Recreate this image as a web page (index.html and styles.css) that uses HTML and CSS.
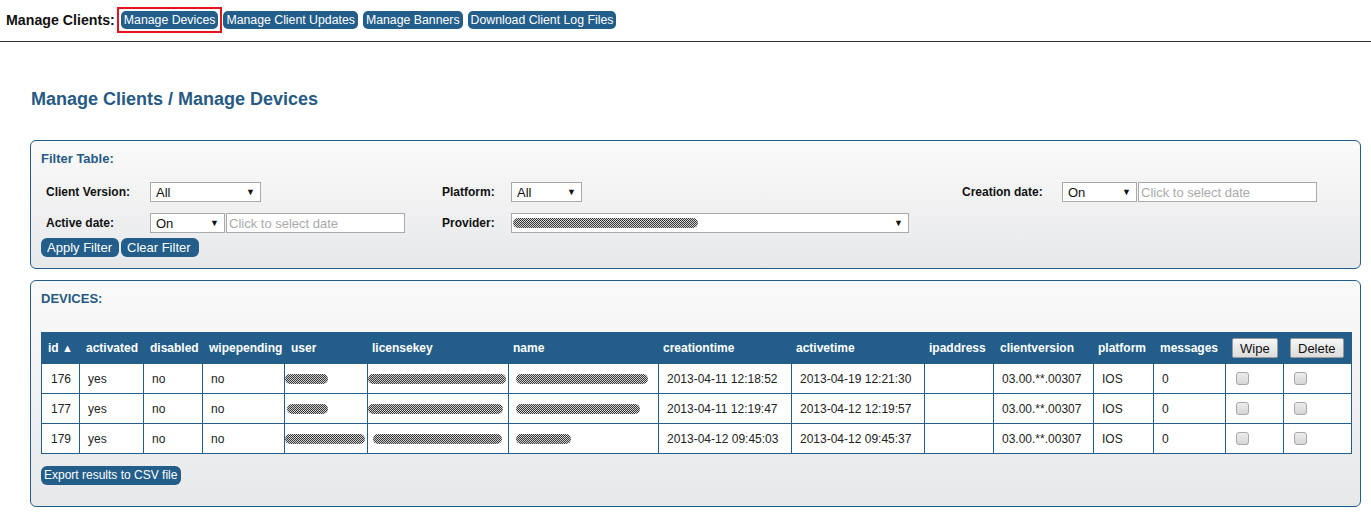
FILE: index.html
```html
<!DOCTYPE html>
<html>
<head>
<meta charset="utf-8">
<link rel="stylesheet" href="styles.css">
</head>
<body>
<div class="topbar">
  <span class="toplabel">Manage Clients:</span>
  <nav class="topnav">
    <span class="hl"><a class="btn">Manage Devices</a></span>
    <a class="btn">Manage Client Updates</a>
    <a class="btn">Manage Banners</a>
    <a class="btn">Download Client Log Files</a>
  </nav>
</div>

<main class="content">
  <h1 class="title">Manage Clients / Manage Devices</h1>

  <section class="panel filter">
    <h2 class="panel-title">Filter Table:</h2>
    <div class="fgrid">
      <label class="flabel">Client Version:</label>
      <div class="fctl"><div class="sel w111"><span>All</span><span class="arr">▼</span></div></div>
      <label class="flabel">Platform:</label>
      <div class="fctl"><div class="sel w70"><span>All</span><span class="arr">▼</span></div></div>
      <label class="flabel">Creation date:</label>
      <div class="fctl"><div class="sel w75"><span>On</span><span class="arr">▼</span></div><div class="datein">Click to select date</div></div>

      <label class="flabel">Active date:</label>
      <div class="fctl"><div class="sel w75"><span>On</span><span class="arr">▼</span></div><div class="datein">Click to select date</div></div>
      <label class="flabel">Provider:</label>
      <div class="fctl span3"><div class="sel w397"><span class="blob" style="width:185px;margin-left:-4px"></span><span class="arr">▼</span></div></div>
    </div>
    <div class="fbuttons">
      <a class="btn big">Apply Filter</a><a class="btn big">Clear Filter</a>
    </div>
  </section>

  <section class="panel devices">
    <h2 class="panel-title">DEVICES:</h2>
    <table class="dtable">
      <colgroup>
        <col style="width:38px"><col style="width:64px"><col style="width:59px"><col style="width:82px">
        <col style="width:83px"><col style="width:141px"><col style="width:150px"><col style="width:133px">
        <col style="width:133px"><col style="width:69px"><col style="width:100px"><col style="width:60px">
        <col style="width:72px"><col style="width:58px"><col style="width:68px">
      </colgroup>
      <thead>
        <tr>
          <th>id <span class="sort">▲</span></th><th>activated</th><th>disabled</th><th>wipepending</th>
          <th>user</th><th class="pl">licensekey</th><th class="pl">name</th><th class="pl">creationtime</th>
          <th class="pl">activetime</th><th class="pl">ipaddress</th><th>clientversion</th><th class="pl">platform</th>
          <th>messages</th><th><button class="gbtn">Wipe</button></th><th><button class="gbtn">Delete</button></th>
        </tr>
      </thead>
      <tbody>
        <tr>
          <td class="num">176</td><td>yes</td><td>no</td><td>no</td>
          <td class="bc"><span class="blob" style="width:43px"></span></td>
          <td class="bc"><span class="blob" style="width:138px"></span></td>
          <td class="bc"><span class="blob" style="width:132px;margin-left:7px"></span></td>
          <td>2013-04-11 12:18:52</td><td>2013-04-19 12:21:30</td><td></td>
          <td>03.00.**.00307</td><td>IOS</td><td>0</td>
          <td class="cb"><input type="checkbox"></td><td class="cb"><input type="checkbox"></td>
        </tr>
        <tr>
          <td class="num">177</td><td>yes</td><td>no</td><td>no</td>
          <td class="bc"><span class="blob" style="width:41px;margin-left:2px"></span></td>
          <td class="bc"><span class="blob" style="width:135px"></span></td>
          <td class="bc"><span class="blob" style="width:124px;margin-left:7px"></span></td>
          <td>2013-04-11 12:19:47</td><td>2013-04-12 12:19:57</td><td></td>
          <td>03.00.**.00307</td><td>IOS</td><td>0</td>
          <td class="cb"><input type="checkbox"></td><td class="cb"><input type="checkbox"></td>
        </tr>
        <tr>
          <td class="num">179</td><td>yes</td><td>no</td><td>no</td>
          <td class="bc"><span class="blob" style="width:80px"></span></td>
          <td class="bc"><span class="blob" style="width:129px;margin-left:5px"></span></td>
          <td class="bc"><span class="blob" style="width:55px;margin-left:7px"></span></td>
          <td>2013-04-12 09:45:03</td><td>2013-04-12 09:45:37</td><td></td>
          <td>03.00.**.00307</td><td>IOS</td><td>0</td>
          <td class="cb"><input type="checkbox"></td><td class="cb"><input type="checkbox"></td>
        </tr>
      </tbody>
    </table>
    <div class="export"><a class="btn exp">Export results to CSV file</a></div>
  </section>
</main>
</body>
</html>
```

FILE: styles.css
```css
* { box-sizing: border-box; }
body {
  margin: 0;
  font-family: "Liberation Sans", Arial, sans-serif;
  color: #222;
  background: #fff;
}
.topbar {
  display: flex;
  align-items: center;
  height: 42px;
  padding: 0 0 2px 6px;
  border-bottom: 1px solid #333;
}
.toplabel {
  font-size: 14.2px;
  font-weight: bold;
  color: #111;
  margin-right: 6px;
}
.topnav {
  display: flex;
  gap: 5px;
}
.hl {
  display: inline-flex;
  outline: 2px solid #e8131a;
  outline-offset: 2px;
}
.btn {
  display: inline-flex;
  align-items: center;
  height: 18px;
  padding: 0 3px;
  background: #235e8a;
  color: #fff;
  font-size: 12.3px;
  border-radius: 5px;
  white-space: nowrap;
  cursor: pointer;
}
.content {
  padding: 0 10px 0 30px;
}
.title {
  margin: 48px 0 0 1px;
  height: 18px;
  line-height: 18px;
  font-size: 18px;
  font-weight: bold;
  color: #265a84;
}
.panel {
  border: 1px solid #235e8a;
  border-radius: 6px;
  background: linear-gradient(#fafafa, #e7e8ea);
  padding: 0 10px;
}
.filter {
  margin-top: 32px;
  height: 129px;
}
.panel-title {
  margin: 0;
  font-size: 13px;
  font-weight: bold;
  color: #265a84;
  height: 16px;
  line-height: 16px;
}
.filter .panel-title { margin-top: 10px; }
.fgrid {
  display: grid;
  grid-template-columns: 104px 292px 69px 451px 100px auto;
  grid-auto-rows: 20px;
  row-gap: 11px;
  margin: 15px 0 0 5px;
  align-items: center;
}
.span3 { grid-column: span 3; }
.flabel {
  font-size: 12px;
  font-weight: bold;
  color: #111;
}
.fctl {
  display: flex;
  height: 20px;
}
.sel {
  display: flex;
  align-items: center;
  justify-content: space-between;
  height: 20px;
  border: 1px solid #aaa;
  background: #fff;
  padding: 0 5px 0 5px;
  font-size: 13px;
  color: #111;
}
.arr { font-size: 9px; }
.w111 { width: 111px; }
.w70 { width: 71px; }
.w75 { width: 75px; }
.w397 { width: 398px; }
.datein {
  width: 179px;
  height: 20px;
  border: 1px solid #aaa;
  background: #fff;
  font-size: 13px;
  color: #aaa;
  padding: 1px 2px;
  line-height: 17px;
  margin-left: 1px;
}
.fbuttons {
  display: flex;
  gap: 2px;
  margin-top: 5px;
}
.btn.big {
  height: 19px;
  padding: 0 5px 0 6px;
  font-size: 13px;
  border-radius: 6px;
  width: 78px;
}
.btn.exp {
  height: 19px;
  padding: 0 3px;
  font-size: 12px;
  border-radius: 6px;
  width: 140px;
}
.devices {
  margin-top: 11px;
  height: 227px;
}
.devices .panel-title { margin-top: 10px; }
.dtable {
  margin-top: 25px;
  border-collapse: collapse;
  table-layout: fixed;
  width: 1310px;
  font-size: 12px;
}
.dtable th {
  background: #235e8a;
  color: #fff;
  font-weight: bold;
  text-align: left;
  height: 31px;
  padding: 0 0 0 6px;
  white-space: nowrap;
  border: 1px solid #235e8a;
}
.dtable th.pl { padding-left: 4px; }
.sort { font-size: 11px; }
.dtable td {
  height: 30px;
  padding: 0 0 0 8px;
  border: 1px solid #235e8a;
  background: #fff;
  white-space: nowrap;
}
.dtable td.num { padding-left: 9px; }
.dtable td.bc { padding-left: 0; }
.dtable td.cb { padding-left: 7px; }
.dtable input[type="checkbox"] {
  appearance: none;
  -webkit-appearance: none;
  display: block;
  margin: 0 0 0 3px;
  width: 13px;
  height: 13px;
  border: 1px solid #a8a8a8;
  border-radius: 3px;
  background: linear-gradient(#ececec, #d6d6d6);
}
.blob {
  display: inline-block;
  height: 10px;
  vertical-align: middle;
  border-radius: 5px;
  background: repeating-conic-gradient(#3a3a3a 0 25%, #cfcfcf 0 50%) 0 0 / 2px 2px;
}
.gbtn {
  font-family: "Liberation Sans", Arial, sans-serif;
  font-size: 13px;
  height: 20px;
  padding: 0 7px;
  border: 1px solid #999;
  border-radius: 2px;
  background: linear-gradient(#f6f6f6, #dcdcdc);
  color: #111;
}
.export {
  margin-top: 11px;
}
```
